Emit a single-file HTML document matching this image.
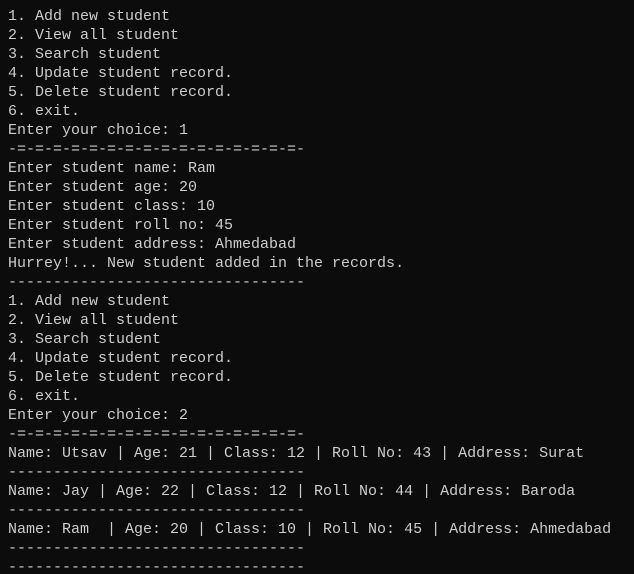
<!DOCTYPE html>
<html><head><style>
html,body{margin:0;padding:0;background:#0c0c0c;width:634px;height:574px;overflow:hidden}
pre{margin:0;padding:7px 0 0 8px;font-family:"Liberation Mono","DejaVu Sans Mono",monospace;font-size:15px;line-height:19px;color:#cccccc;white-space:pre}
</style></head><body><pre>1. Add new student
2. View all student
3. Search student
4. Update student record.
5. Delete student record.
6. exit.
Enter your choice: 1
-=-=-=-=-=-=-=-=-=-=-=-=-=-=-=-=-
Enter student name: Ram
Enter student age: 20
Enter student class: 10
Enter student roll no: 45
Enter student address: Ahmedabad
Hurrey!... New student added in the records.
---------------------------------
1. Add new student
2. View all student
3. Search student
4. Update student record.
5. Delete student record.
6. exit.
Enter your choice: 2
-=-=-=-=-=-=-=-=-=-=-=-=-=-=-=-=-
Name: Utsav | Age: 21 | Class: 12 | Roll No: 43 | Address: Surat
---------------------------------
Name: Jay | Age: 22 | Class: 12 | Roll No: 44 | Address: Baroda
---------------------------------
Name: Ram  | Age: 20 | Class: 10 | Roll No: 45 | Address: Ahmedabad
---------------------------------
---------------------------------</pre></body></html>
